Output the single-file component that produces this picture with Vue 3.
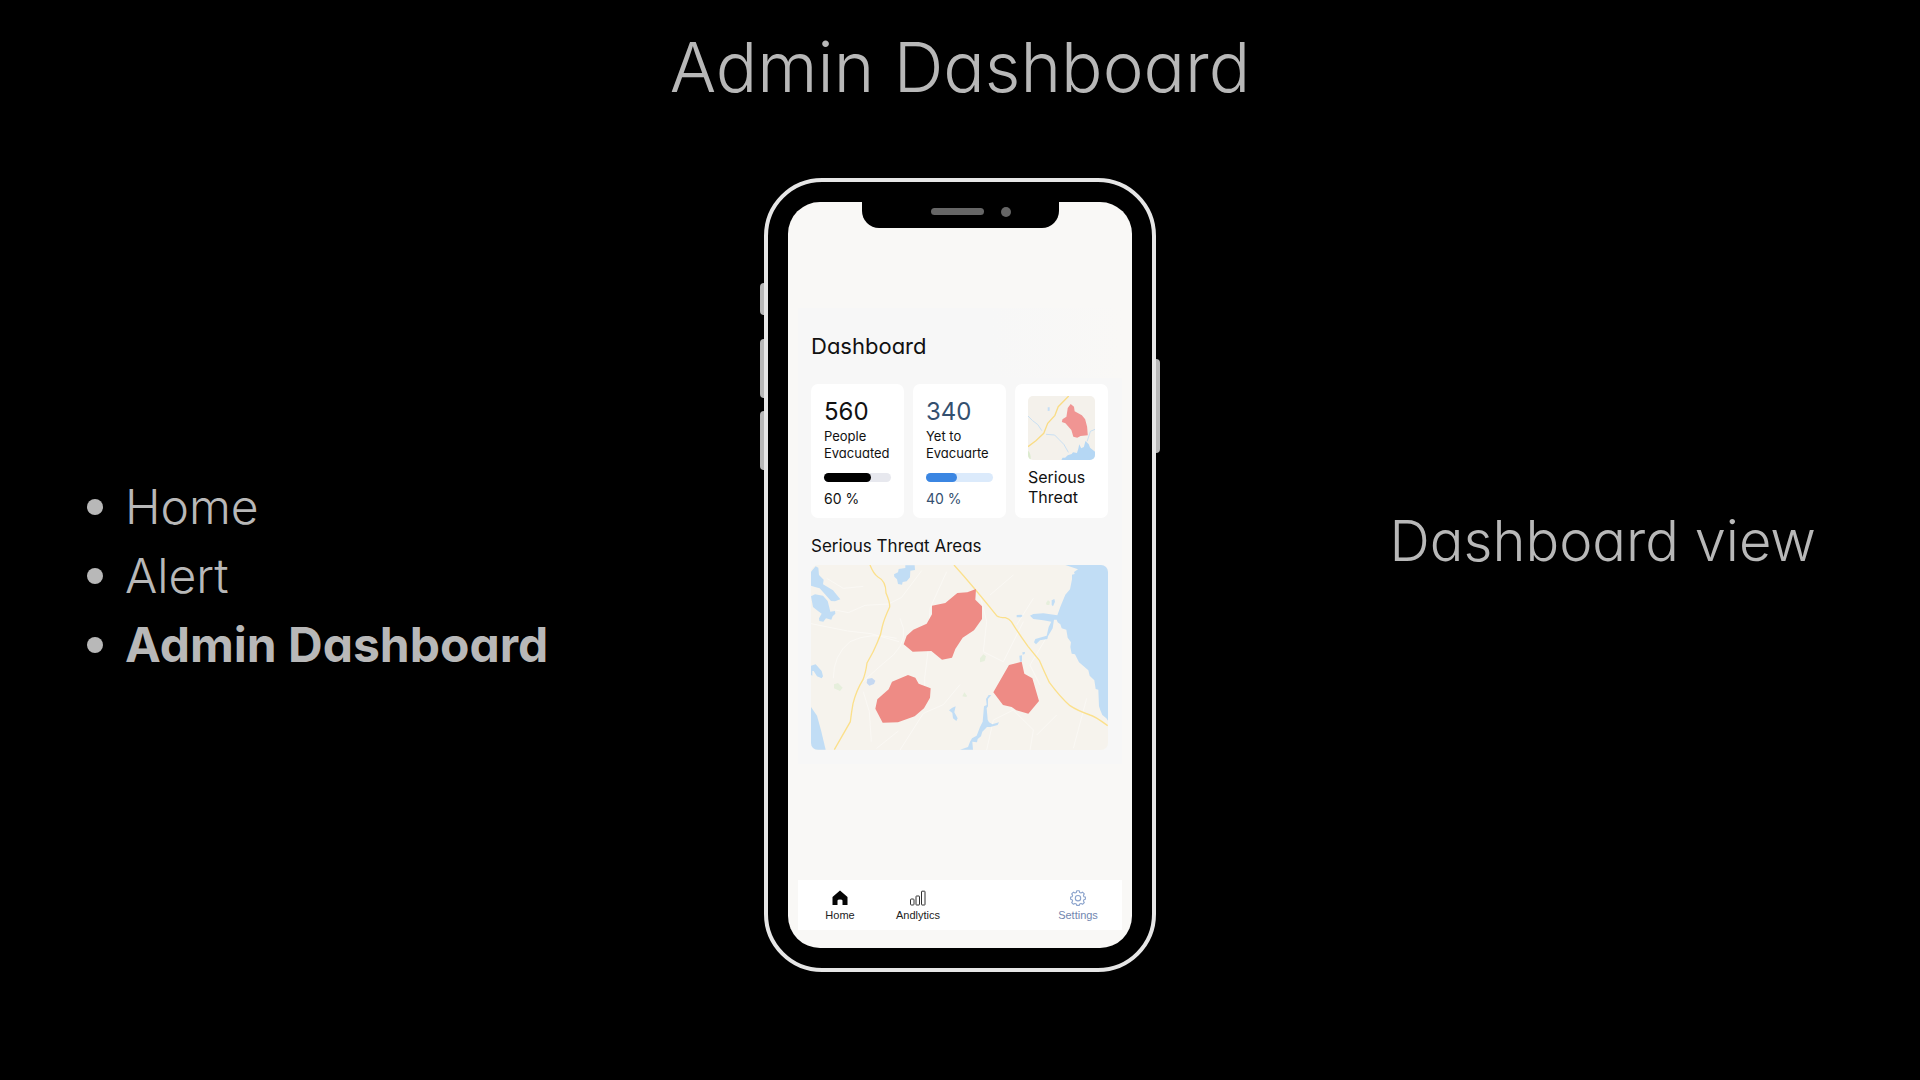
<script setup>
const sections = [
  { name: 'Home', href: '#home' },
  { name: 'Alert', href: '#alert' },
  { name: 'Admin Dashboard', href: '#admin', active: true }
]
const stats = [
  { value: '560', lines: ['People', 'Evacuated'], label: '60 %', fill: 70, tone: 'dark' },
  { value: '340', lines: ['Yet to', 'Evacuarte'], label: '40 %', fill: 46, tone: 'blue' }
]
</script>

<template>
  <main class="slide">
    <h1 class="title">Admin Dashboard</h1>

    <div class="stage">
      <nav class="sections" aria-label="Sections">
        <ul>
          <li v-for="s in sections" :key="s.name" :class="{ active: s.active }">
            <a :href="s.href">{{ s.name }}</a>
          </li>
        </ul>
      </nav>

      <div class="phone">
        <span class="key key-mute"></span>
        <span class="key key-up"></span>
        <span class="key key-down"></span>
        <span class="key key-power"></span>
        <div class="notch"><span class="speaker"></span><span class="camera"></span></div>

        <div class="screen">
          <section class="content">
            <h2>Dashboard</h2>
            <div class="cards">
              <article v-for="s in stats" :key="s.value" class="card" :class="s.tone">
                <strong>{{ s.value }}</strong>
                <p><span v-for="l in s.lines" :key="l">{{ l }}</span></p>
                <div class="bar"><div class="fill" :style="{ width: s.fill + '%' }"></div></div>
                <small>{{ s.label }}</small>
              </article>
              <article class="card threat">
                <svg class="mini" viewBox="53 48 204 192" preserveAspectRatio="none" aria-hidden="true">
                  <rect x="53" y="48" width="204" height="192" fill="#f4f1eb" />
                  <path d="M53 212q10 8 8 28h-8z" fill="#dcebcf" />
                  <path d="M113 82l6 0 0 10-6 1z" fill="#c5def5" />
                  <g fill="none" stroke="#c9dff2" stroke-width="3">
                    <path d="M53 108l14 14 16 12 12 18M108 163l26 2 14 14 14 14 14 24M257 148l-14 6-10 30" />
                  </g>
                  <path d="M155 240l3-7 8 0 8-7 12-4 4-5 12 2 4-12 3-14 6 12 8-4 5-18 10 10 4 10 15 12v25z" fill="#b5d7f4" />
                  <path d="M53 200l24-18 24-22 12-30 22-24 10-26 32-32" fill="none" stroke="#f9dc85" stroke-width="4" />
                  <path d="M183 72l10 8 2 14 22 12 10 12 6 22 2 26-22 2-10 5-12-3-6-20-18-20-11-4 2-8 12-8 4-26z" fill="#f09593" />
                </svg>
                <h3>Serious<br />Threat</h3>
              </article>
            </div>

            <h3 class="map-title">Serious Threat Areas</h3>
            <svg class="map" viewBox="33 30 891 555" preserveAspectRatio="none" role="img" aria-label="Serious threat areas map">
              <rect x="33" y="30" width="891" height="555" fill="#f6f3ed" />
              <g fill="none" stroke="#faf8f4" stroke-width="3">
                <path d="M33 206l110 22 70 8 84 24M80 70l50 30 60-6M105 165l40 8 50-22 70-4 40-20 60-80M100 370q0-70 50-110 60-30 140-10M300 190q30 60-20 110-60 50-90 80M190 410l18 60 6 90M230 580l65-52M300 585l70-110 60-26 50-60M390 160l-6 130-10 80 0 60M440 50l-50 110M540 120l20 80-10 90 60 30 60-120M560 585l20-90 60-30 60 60-10 60M700 130l-50 80M750 230l-60 100 30 60M770 480l-60 60M860 430l-40 150M640 60l-70 60" />
              </g>
              <g fill="#c1ddf5">
                <path d="M33 50l14-16 8 4 2 22 14 14-2 14 30 18 22 27-16 6-12-1-18-20-16-18-14-4-12-4z" />
                <path d="M33 124l12-6 24 4 14 16 6 24 2 8 14-2 1 8-8 8-4 10-16-4-8 10-12-2-1-8 8-14-14-10-12-10z" />
                <path d="M282 58l12-6 2-10 20-3 0-8 28 0 1 14-14 2-1 20-10 12-12 2-2 8-12-2-3-14-8-8z" />
                <path d="M33 332l14-4 18 20 4 16-4 6-14-6-10-16-4 0 0 14-4-2z" />
                <path d="M33 456l18 26 12 44 14 58H33z" />
                <path d="M447 466l10-8 10-4-4 18 10 18-4 8-10-8-2-16z" />
              </g>
              <path d="M202 372l14-3 10 8-4 10-14 5-8-8z" fill="#c5d8f1" />
              <path d="M102 388l12-4 14 14-8 10-18-8zM540 310l10-12 8 6-4 14-14 4zM487 424l6-12 8 10-2 4zM738 144l6-8 6 4-2 10-8 0z" fill="#e6efdc" />
              <g transform="translate(450 0)" fill="#c1ddf5">
                <path d="M346 30h130v470l-7-10-12-10-6-14-4-12-2-50-8-2-4-26-14-14-4-16-28-24-12-24-10-2-4-20 2-14-10-14-4-24-14-4-4-12-8-6-3-8-8 0-4 26-14 24-2 8-22 4-12 12-6-6 4-10 34-10 6-26 8-16-24-4-30-4-10-10 10-5 30-2 42 6 10-28 14-34 14-16 6-30 0-14 8-2-2-6 12-8z" />
                <path d="M200 180l14-1 4 4-6 4-12 0zM305 136l8-4 2 8-6 14-4-4zM208 302l8-1 0 18-6 2zM217 292l8-1-1 6-6 2z" />
                <path d="M124 420l-10 12 0 22-4 6 3 34 4 8 10 6 20-6-4 8-22 6-10 0-14 14-4 14-10 8-2 10-14-2 2 24H30l24-8 6-16 6-10 14-8 10-26 8-16 4-46 8-4-2-18 8-12z" />
              </g>
              <path d="M210 30q10 26 24 36 24 12 24 48 12 28 11 42-16 34-22 58-4 26-14 46-12 30-32 64-4 30-12 50-20 32-30 72-4 22-8 54l-48 84" class="road" />
              <path d="M462 30q56 62 128 152 8 6 26 6 12 4 18 12 22 36 50 74l34 42q18 42 30 66 34 46 62 70 20 14 60 28 12 2 53 32" class="road" />
              <g fill="#ee8b85">
                <path d="M528 102l-2 32 20 20v38l-24 34-34 22-22 34-10 26-30 6-32-26-56 2-27-22 9-26 20-18 40-18 16-28v-26l40-8 36-30 30-2z" />
                <path d="M276 380l48-20 22 8 10 18 36 14-2 28-18 32-28 24-50 18-46 1-22-42 6-28 34-30z" />
                <path d="M627 330l38-10 8 36 24 14 20 68-32 38-36-10-14-10-26-6-29-38z" />
              </g>
            </svg>
          </section>

          <nav class="tabs" aria-label="App">
            <button type="button">
              <svg viewBox="0 0 16 16"><path d="M8 0.5L15.5 7V15H10.500V10.500Q10.500 9.500 8 9.500T5.500 10.500V15H0.500V7Z" fill="#050505" /></svg>
              Home
            </button>
            <button type="button">
              <svg viewBox="0 0 16 16" fill="none" stroke="#333" stroke-width="1"><rect x="0.500" y="9" width="3.500" height="6" rx="0.800" /><rect x="6" y="6" width="3.500" height="9" rx="0.500" /><rect x="11.500" y="1.200" width="3.500" height="13.800" rx="0.500" /></svg>
              Andlytics
            </button>
            <button type="button" class="settings">
              <svg viewBox="0 0 16 16" fill="none" stroke="#8ba3cc" stroke-width="1.100"><path d="M6.700 .8h2.600l.4 1.700 1.300.5 1.500-.9 1.800 1.800-.9 1.500.5 1.300 1.500.4v2.200l-1.500.4-.5 1.300.9 1.500-1.800 1.800-1.500-.9-1.300.5-.4 1.500H6.700l-.4-1.500-1.300-.5-1.500.9-1.800-1.800.9-1.500-.5-1.300-1.500-.4V7.100l1.500-.4.5-1.300-.9-1.500 1.800-1.800 1.500.9 1.300-.5z" stroke-linejoin="round" /><circle cx="8" cy="8.200" r="2.700" /></svg>
              Settings
            </button>
          </nav>
        </div>
      </div>

      <p class="caption">Dashboard view</p>
    </div>
  </main>
</template>

<style>
html,
body {
  margin: 0;
  background: #000;
}
</style>

<style scoped>
* {
  box-sizing: border-box;
}
.slide {
  min-height: 100vh;
  padding: 24px 0;
  background: #000;
  color: #b8b8b8;
  font-family: Inter, 'Liberation Sans', sans-serif;
  font-feature-settings: 'cv11';
}
h1, h2, h3, p, ul {
  margin: 0;
  padding: 0;
  font-weight: 400;
}
.title {
  font-size: 69px;
  line-height: 86px;
  font-weight: 300;
  text-align: center;
}
.stage {
  display: grid;
  grid-template-columns: 1fr 392px 1fr;
  align-items: center;
  margin-top: 68px;
}
.sections {
  padding-left: 87px;
}
.sections ul {
  list-style: none;
}
.sections li {
  display: flex;
  align-items: center;
  gap: 22px;
  font-size: 48px;
  line-height: 69px;
  font-weight: 300;
}
.sections li::before {
  content: '';
  width: 16px;
  height: 16px;
  margin-top: 2px;
  border-radius: 50%;
  background: #b8b8b8;
}
.sections a {
  color: inherit;
  text-decoration: none;
}
.sections .active {
  font-weight: 700;
}
.caption {
  padding: 0 104px 68px 0;
  font-size: 56px;
  line-height: 68px;
  font-weight: 300;
  text-align: right;
}
.phone {
  position: relative;
  padding: 20px;
  border: 4px solid #e6e6e6;
  border-radius: 58px;
}
.key {
  position: absolute;
  left: -8px;
  width: 4px;
  background: #b8b8b8;
  border-radius: 4px 0 0 4px;
}
.key-mute { top: 101px; height: 32px; }
.key-up { top: 157px; height: 59px; }
.key-down { top: 229px; height: 59px; }
.key-power {
  top: 177px;
  right: -8px;
  left: auto;
  height: 94px;
  border-radius: 0 4px 4px 0;
}
.notch {
  position: absolute;
  top: 18px;
  left: 94px;
  display: flex;
  align-items: center;
  gap: 17px;
  width: 197px;
  height: 28px;
  padding: 0 0 5px 69px;
  border-radius: 0 0 17px 17px;
  background: #000;
}
.speaker {
  width: 53px;
  height: 7px;
  border-radius: 4px;
  background: #666;
}
.camera {
  width: 10px;
  height: 10px;
  border-radius: 50%;
  background: #666;
}
.screen {
  display: flex;
  flex-direction: column;
  min-height: 746px;
  padding: 106px 10px 18px;
  border-radius: 32px;
  background: #f9f8f6;
  color: #111;
}
.content {
  padding: 24px 14px 14px 13px;
  background: linear-gradient(90deg, #f7f7f7 60%, #f9f8f6) top / 100% 70px no-repeat, #f7f7f7;
}
h2 {
  font-size: 22px;
  line-height: 28px;
}
.cards {
  display: grid;
  grid-template-columns: repeat(3, 1fr);
  gap: 9px;
  margin-top: 24px;
}
.card {
  display: flex;
  flex-direction: column;
  min-height: 134px;
  padding: 14px 13px 8px;
  border-radius: 7px;
  background: #fff;
}
.card strong {
  font-size: 24px;
  line-height: 28px;
  font-weight: 400;
}
.card p {
  display: flex;
  flex-direction: column;
  margin-top: 2px;
  font-size: 13px;
  line-height: 17px;
  white-space: nowrap;
}
.bar {
  height: 9px;
  margin-top: 11px;
  border-radius: 5px;
  background: #e7e8ee;
}
.fill {
  height: 9px;
  border-radius: 5px;
  background: #000;
}
.card small {
  margin-top: 8px;
  font-size: 14px;
  line-height: 18px;
}
.blue strong, .blue small { color: #34506f; }
.blue .bar { background: #dbeafb; }
.blue .fill { background: #3b86e2; }
.threat {
  padding-top: 12px;
}
.mini {
  width: 100%;
  height: 64px;
  border-radius: 5px;
}
.threat h3 {
  margin-top: 7px;
  font-size: 16px;
  line-height: 20px;
}
.map-title {
  margin-top: 17px;
  font-size: 17px;
  line-height: 22px;
}
.map {
  display: block;
  width: 100%;
  height: 185px;
  margin-top: 8px;
  border-radius: 7px;
}
.road {
  fill: none;
  stroke: #fbe08c;
  stroke-width: 4;
}
.tabs {
  display: grid;
  grid-template-columns: 84px 72px 1fr 88px;
  height: 50px;
  margin-top: auto;
  background: #fff;
}
.tabs button {
  display: flex;
  flex-direction: column;
  align-items: center;
  gap: 2px;
  padding: 10px 0 0;
  border: 0;
  background: none;
  color: #222;
  font: 11px/14px 'Liberation Sans', sans-serif;
}
.tabs svg {
  width: 16px;
  height: 16px;
}
.tabs .settings {
  grid-column: 4;
  color: #7186b0;
}
</style>
